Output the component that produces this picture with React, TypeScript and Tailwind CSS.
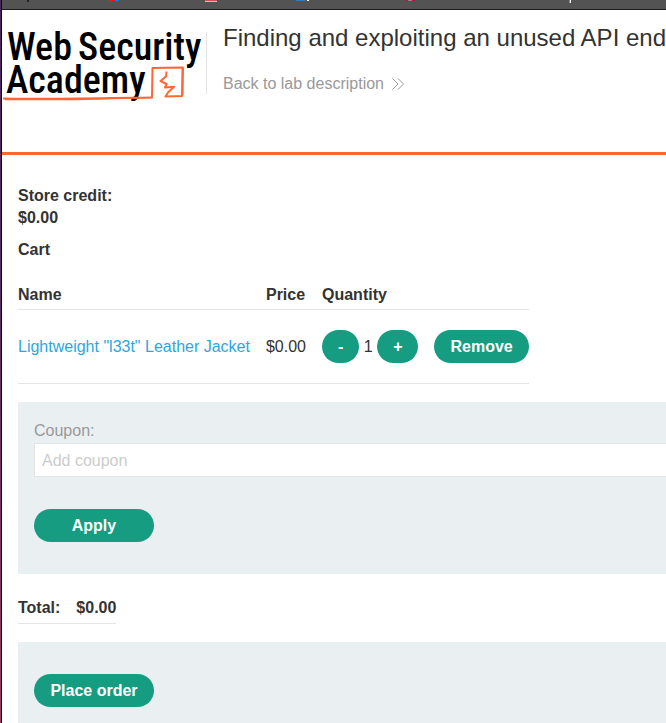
import React from "react";

const button =
  "h-[33px] rounded-full bg-[#169c80] px-4 pt-px text-base leading-[22px] font-bold text-white";

function BrowserBar() {
  return (
    <div className="h-[10px] border-b border-[#1b1b1b] bg-[#535353]">
      <svg className="block h-[9px] w-[666px]" viewBox="2 0 666 9" shapeRendering="crispEdges" aria-hidden="true">
        <rect x="27" y="0" width="2" height="2" fill="#222" />
        <rect x="109" y="0" width="6" height="1" fill="#e11d23" />
        <rect x="115" y="0" width="4" height="1" fill="#2373e0" />
        <rect x="205" y="0" width="12" height="1" fill="#d05058" />
        <rect x="205" y="1" width="12" height="1" fill="#d9b8ba" />
        <rect x="296" y="0" width="9" height="1" fill="#2f7cc0" />
        <rect x="307" y="0" width="2" height="1" fill="#fff" />
        <rect x="406" y="0" width="2" height="1" fill="#a3203f" />
        <rect x="408" y="0" width="4" height="1" fill="#888" />
        <rect x="412" y="0" width="3" height="1" fill="#a3203f" />
        <rect x="569" y="0" width="1" height="3" fill="#8a8a8a" />
        <rect x="570" y="0" width="1" height="3" fill="#f0f0f0" />
      </svg>
    </div>
  );
}

function Logo() {
  return (
    <svg
      className="block h-[74px] w-[200px] shrink-0 overflow-visible"
      viewBox="2 30 200 74"
      role="img"
      aria-label="Web Security Academy"
    >
      <g
        fill="#000"
        fontSize="38"
        fontWeight="500"
        style={{ fontFamily: '"Roboto Condensed", "Liberation Sans Narrow", Lato, sans-serif' }}
      >
        <text x="7" y="60">Web</text>
        <text x="78" y="60">Security</text>
        <text x="6" y="93">Academy</text>
      </g>
      <g fill="none" stroke="#ff6633" strokeLinejoin="round">
        <path d="M3 98.500 C45 99.500 105 98 152 97.500 L152.500 68 L182.500 67.500 L182.500 95" strokeWidth="2" />
        <path d="M5 99.500 L75 99.500 L151 97.500" strokeWidth="1.500" />
        <path d="M183 67.500 L182 96 L165.500 96.500 L168 92.500 L174 86.800 L165 87.500 L166.500 84 L160.500 81 L166 76.500 L166.500 71.500" strokeWidth="2" />
      </g>
    </svg>
  );
}

export default function App() {
  return (
    <div
      className="flex h-screen overflow-hidden bg-white text-base leading-[22px] text-[#333332]"
      style={{ fontFamily: '"Liberation Sans", Arial, sans-serif' }}
    >
      <div className="w-[2px] shrink-0 border-r border-black bg-linear-to-b from-[#442758] via-[#5d3062] to-[#963f60]" />
      <div className="min-w-[900px] grow">
        <BrowserBar />
        <header className="flex h-[145px] items-start border-b-3 border-[#ff6633] pt-[14px]">
          <div className="mt-[6px] flex gap-1">
            <Logo />
            <div className="mt-[2px] h-[62px] w-px bg-[#e4e4e4]" />
          </div>
          <div className="ml-4 flex flex-col items-start gap-[21px]">
            <h2 className="text-2xl leading-7 whitespace-nowrap">
              Finding and exploiting an unused API endpoint
            </h2>
            <a href="#lab" className="flex items-center gap-2 text-[#999]">
              Back to lab description
              <svg className="h-3 w-3" viewBox="0 0 12 12" fill="none" stroke="#999" aria-hidden="true">
                <path d="M0.500 0.500 L6 6 L0.500 11.500 M6 0.500 L11.500 6 L6 11.500" />
              </svg>
            </a>
          </div>
        </header>

        <main className="px-4 pt-[30px]">
          <p className="font-bold">
            Store credit:
            <br />
            $0.00
          </p>
          <h1 className="mt-[10px] font-bold">Cart</h1>

          <table className="mt-[18px] border-collapse">
            <thead>
              <tr className="h-[30px] border-b border-[#e4e4e4] text-left">
                <th className="pt-[2px] pr-4">Name</th>
                <th className="pt-[2px] pr-4">Price</th>
                <th className="pt-[2px] pr-4">Quantity</th>
                <th aria-label="Actions" />
              </tr>
            </thead>
            <tbody>
              <tr className="h-[74px] border-b border-[#e4e4e4]">
                <td className="pt-[2px] pr-4">
                  <a href="#product" className="text-[#29a8df]">
                    Lightweight "l33t" Leather Jacket
                  </a>
                </td>
                <td className="pt-[2px] pr-4">$0.00</td>
                <td className="pr-4 whitespace-nowrap">
                  <button type="button" className={button}>-</button>{" "}
                  1{" "}
                  <button type="button" className={button}>+</button>
                </td>
                <td>
                  <button type="button" className={button}>Remove</button>
                </td>
              </tr>
            </tbody>
          </table>

          <form className="mt-[18px] h-[172px] bg-[#eaeff2] px-4 pt-[18px]" onSubmit={(e) => e.preventDefault()}>
            <label htmlFor="coupon" className="block text-[#999]">Coupon:</label>
            <input
              id="coupon"
              type="text"
              placeholder="Add coupon"
              className="mt-px block h-[34px] w-full border border-[#e4e4e4] bg-white px-[7px] pt-[2px] placeholder:text-[#ccc]"
            />
            <button type="submit" className={`${button} mt-8 block w-[120px]`}>Apply</button>
          </form>

          <table className="mt-[18px] border-collapse">
            <tbody>
              <tr className="h-[32px] border-b border-[#e4e4e4] text-left">
                <th className="pt-[2px] pr-4">Total:</th>
                <th className="pt-[2px]">$0.00</th>
              </tr>
            </tbody>
          </table>

          <form className="mt-[18px] bg-[#eaeff2] px-4 py-8" onSubmit={(e) => e.preventDefault()}>
            <button type="submit" className={`${button} block w-[120px]`}>Place order</button>
          </form>
        </main>
      </div>
    </div>
  );
}
